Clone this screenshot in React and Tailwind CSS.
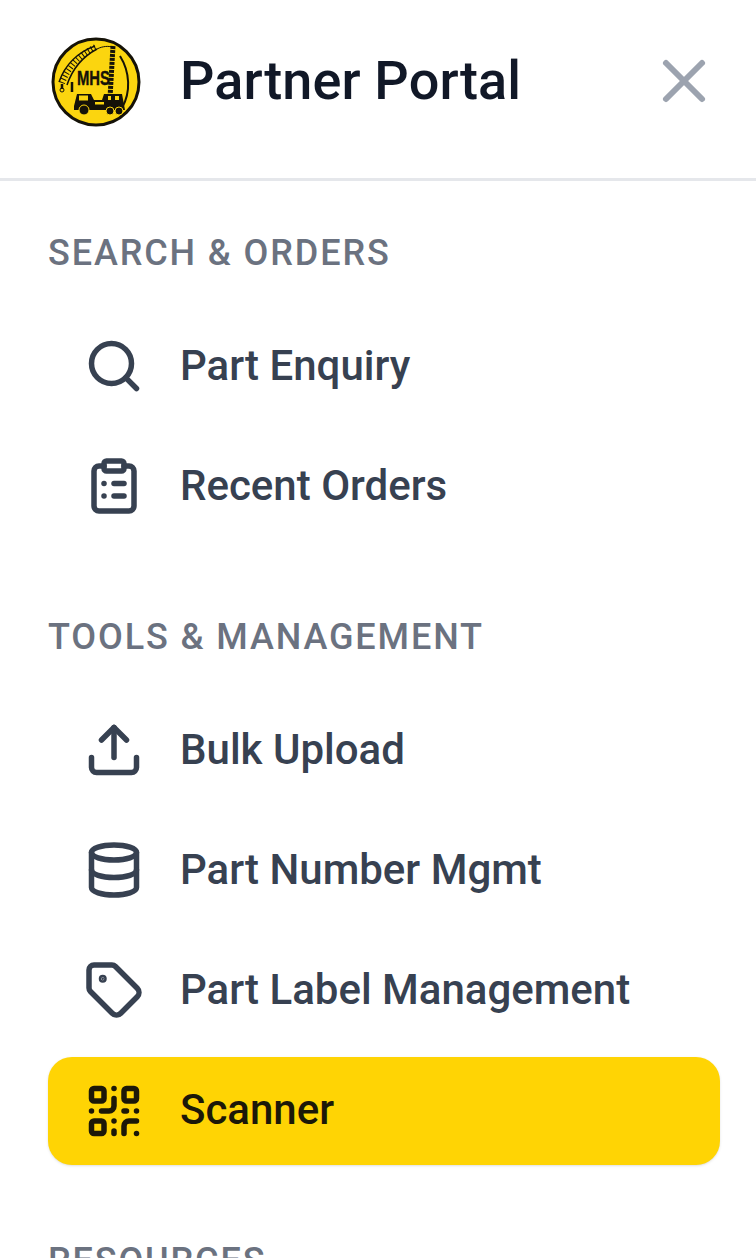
import { Search, ClipboardList, Upload, Database, Tag, QrCode, X } from "lucide-react";

const SECTIONS = [
  {
    title: "SEARCH & ORDERS",
    items: [
      { name: "Part Enquiry", icon: Search },
      { name: "Recent Orders", icon: ClipboardList },
    ],
  },
  {
    title: "TOOLS & MANAGEMENT",
    items: [
      { name: "Bulk Upload", icon: Upload },
      { name: "Part Number Mgmt", icon: Database },
      { name: "Part Label Management", icon: Tag },
      { name: "Scanner", icon: QrCode, active: true },
    ],
  },
  { title: "RESOURCES", items: [] },
];

function Logo() {
  return (
    <svg viewBox="0 0 96 96" className="w-[96px] h-[96px] shrink-0 translate-y-[1px]">
      <circle cx="48" cy="48" r="43" fill="#fbd50f" stroke="#151208" strokeWidth="3" />
      {/* crane jib, left */}
      <path d="M11 48 C17 31 30 18 47 12" fill="none" stroke="#151208" strokeWidth="1.5" />
      <path d="M19 51 C24 36 34 23 49 15" fill="none" stroke="#151208" strokeWidth="1.5" />
      <path d="M14 49 C20 33 32 20 48 13" fill="none" stroke="#151208" strokeWidth="6" strokeDasharray="1 2.5" />
      <path d="M49 15 C55 12 60 12 65 13" fill="none" stroke="#151208" strokeWidth="1" />
      <path d="M14 50 V55 M24 48 V58" stroke="#151208" strokeWidth="2.5" fill="none" />
      <circle cx="14" cy="56" r="2" fill="none" stroke="#151208" strokeWidth="1" />
      {/* drill mast, right */}
      <path d="M65 12 L62 64" stroke="#151208" strokeWidth="5" strokeDasharray="3 1" fill="none" />
      <path d="M72 22 C82 38 83 58 74 74" stroke="#151208" strokeWidth="2" fill="none" />
      <text
        x="29"
        y="51"
        textLength="33"
        lengthAdjust="spacingAndGlyphs"
        fontFamily="Liberation Sans, sans-serif"
        fontWeight="700"
        fontSize="21"
        fill="#151208"
        stroke="#151208"
        strokeWidth="0.4"
      >
        MHS
      </text>
      {/* truck */}
      <path d="M26 72 L29 60 H43 L46 66 H54 L56 60 H74 L77 76 H26 Z" fill="#151208" />
      <rect x="31" y="61.5" width="9" height="5" fill="#fbd50f" />
      <rect x="47" y="68" width="9" height="2.5" fill="#fbd50f" />
      <rect x="60" y="62" width="3" height="4" fill="#fbd50f" />
      <rect x="67" y="62" width="4" height="4" fill="#fbd50f" />
      <circle cx="36" cy="76" r="5" fill="#151208" stroke="#fbd50f" strokeWidth="1" />
      <circle cx="62" cy="77" r="4" fill="#151208" stroke="#fbd50f" strokeWidth="1" />
      <circle cx="71" cy="77" r="4" fill="#151208" stroke="#fbd50f" strokeWidth="1" />
    </svg>
  );
}

export default function App() {
  return (
    <div className="h-[1258px] overflow-hidden bg-white font-['Roboto',sans-serif]">
      <header className="h-[181px] flex items-center justify-between px-[48px] pb-[16px] border-b-[3px] border-[#e5e7eb]">
        <div className="flex items-center gap-[36px]">
          <Logo />
          <span className="text-[54px] leading-none font-medium tracking-[0.15px] text-[#111827]">Partner Portal</span>
        </div>
        <X className="w-[72px] h-[72px] text-[#9ca3af] -mr-[12px]" strokeWidth={2} />
      </header>

      <nav className="px-[36px] pt-[48px]">
        {SECTIONS.map((s) => (
          <div key={s.title} className="mb-[73px]">
            <h3 className="px-[12px] text-[36px] leading-[48px] font-medium tracking-[1.88px] text-[#6b7280] mb-[35px]">{s.title}</h3>
            <div className="flex flex-col gap-[12px]">
              {s.items.map((item) => {
                const Icon = item.icon;
                return (
                  <div
                    key={item.name}
                    className={
                      item.active
                        ? "h-[108px] mt-[1px] -mb-[1px] flex items-center gap-[36px] px-[36px] ml-[12px] rounded-[24px] bg-[#ffd404] text-[#1c1808] shadow-sm"
                        : "h-[108px] flex items-center gap-[36px] px-[36px] ml-[12px] rounded-[24px] text-[#374151]"
                    }
                  >
                    <Icon className="w-[60px] h-[60px] shrink-0" strokeWidth={2.2} />
                    <span className={item.active ? "text-[42px] leading-none font-medium pb-[2px]" : "text-[42px] leading-none font-medium"}>{item.name}</span>
                  </div>
                );
              })}
            </div>
          </div>
        ))}
      </nav>
    </div>
  );
}
